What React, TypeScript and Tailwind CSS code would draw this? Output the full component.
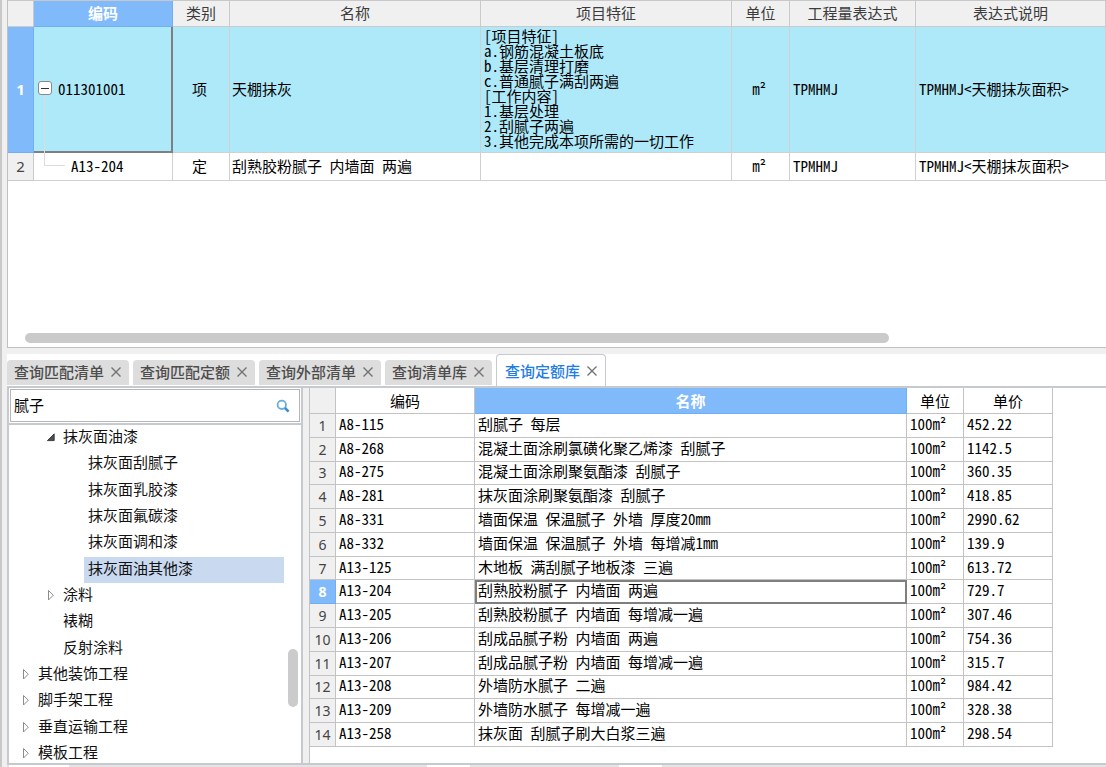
import { useState } from "react";
import type { ReactNode } from "react";

type Quota = { code: string; name: string; price: string };

const quotas: Quota[] = [
  { code: "A8-115", name: "刮腻子 每层", price: "452.22" },
  { code: "A8-268", name: "混凝土面涂刷氯磺化聚乙烯漆 刮腻子", price: "1142.5" },
  { code: "A8-275", name: "混凝土面涂刷聚氨酯漆 刮腻子", price: "360.35" },
  { code: "A8-281", name: "抹灰面涂刷聚氨酯漆 刮腻子", price: "418.85" },
  { code: "A8-331", name: "墙面保温 保温腻子 外墙 厚度20mm", price: "2990.62" },
  { code: "A8-332", name: "墙面保温 保温腻子 外墙 每增减1mm", price: "139.9" },
  { code: "A13-125", name: "木地板 满刮腻子地板漆 三遍", price: "613.72" },
  { code: "A13-204", name: "刮熟胶粉腻子 内墙面 两遍", price: "729.7" },
  { code: "A13-205", name: "刮熟胶粉腻子 内墙面 每增减一遍", price: "307.46" },
  { code: "A13-206", name: "刮成品腻子粉 内墙面 两遍", price: "754.36" },
  { code: "A13-207", name: "刮成品腻子粉 内墙面 每增减一遍", price: "315.7" },
  { code: "A13-208", name: "外墙防水腻子 二遍", price: "984.42" },
  { code: "A13-209", name: "外墙防水腻子 每增减一遍", price: "328.38" },
  { code: "A13-258", name: "抹灰面 刮腻子刷大白浆三遍", price: "298.54" },
];

const features = [
  "[项目特征]",
  "a.钢筋混凝土板底",
  "b.基层清理打磨",
  "c.普通腻子满刮两遍",
  "[工作内容]",
  "1.基层处理",
  "2.刮腻子两遍",
  "3.其他完成本项所需的一切工作",
];

type Node = { label: string; level: 0 | 1 | 2; state?: "open" | "closed" };

const nodes: Node[] = [
  { label: "抹灰面油漆", level: 1, state: "open" },
  { label: "抹灰面刮腻子", level: 2 },
  { label: "抹灰面乳胶漆", level: 2 },
  { label: "抹灰面氟碳漆", level: 2 },
  { label: "抹灰面调和漆", level: 2 },
  { label: "抹灰面油其他漆", level: 2 },
  { label: "涂料", level: 1, state: "closed" },
  { label: "裱糊", level: 1 },
  { label: "反射涂料", level: 1 },
  { label: "其他装饰工程", level: 0, state: "closed" },
  { label: "脚手架工程", level: 0, state: "closed" },
  { label: "垂直运输工程", level: 0, state: "closed" },
  { label: "模板工程", level: 0, state: "closed" },
];

const indent = { 0: "pl-[11px]", 1: "pl-[36px]", 2: "pl-[61px]" };

const tabs = ["查询匹配清单", "查询匹配定额", "查询外部清单", "查询清单库", "查询定额库"];

const mono = "font-['Noto_Sans_Mono_CJK_SC','Liberation_Mono','Noto_Sans_CJK_SC',monospace]";

function Head({ children, selected }: { children?: ReactNode; selected?: boolean }) {
  return (
    <th
      scope="col"
      className={
        selected
          ? "border-r border-b border-[#6fb0f3] bg-[#80bafa] p-0 pb-[2px] font-bold text-white"
          : "border-r border-b border-[#cacaca] bg-[#f0f0f0] p-0 pb-[2px] font-normal text-[#3c3c3c]"
      }
    >
      {children}
    </th>
  );
}

function Cell({ children, className = "" }: { children?: ReactNode; className?: string }) {
  return <td className={`border-r border-b border-[#d0d0d0] pt-0 pb-[3px] ${className}`}>{children}</td>;
}

function BillTable() {
  return (
    <table className="w-full table-fixed border-separate border-spacing-0 border-t border-t-[#c8c8c8] text-[15px] leading-[15px]">
      <colgroup>
        <col className="w-[26px]" />
        <col className="w-[139px]" />
        <col className="w-[57px]" />
        <col />
        <col />
        <col className="w-[58px]" />
        <col className="w-[126px]" />
        <col className="w-[190px]" />
      </colgroup>
      <thead>
        <tr className="h-[26px]">
          <Head />
          <Head selected>编码</Head>
          <Head>类别</Head>
          <Head>名称</Head>
          <Head>项目特征</Head>
          <Head>单位</Head>
          <Head>工程量表达式</Head>
          <Head>表达式说明</Head>
        </tr>
      </thead>
      <tbody className={`${mono} text-black`}>
        <tr className="h-[126px] bg-[#aee9fa]">
          <th
            scope="row"
            className="border-r border-b border-[#6fb0f3] bg-[#80bafa] p-0 font-['Noto_Sans',sans-serif] font-bold text-white"
          >
            1
          </th>
          <td className="relative border-r-2 border-b-2 border-[#7f7f7f] pt-0 pr-0 pb-[2px] pl-1">
            <span className="absolute top-[69px] bottom-[-2px] left-[10px] w-px bg-[#dcdcdc]" />
            <div className="flex items-center gap-[6px]">
              <button
                type="button"
                aria-label="折叠"
                className="flex h-[14px] w-[14px] items-center justify-center rounded-[3px] border border-[#8a8a8a] bg-white"
              >
                <span className="h-px w-2 bg-[#333]" />
              </button>
              <span>011301001</span>
            </div>
          </td>
          <Cell className="pr-[3px] pl-0 text-center">项</Cell>
          <Cell className="px-[2px]">天棚抹灰</Cell>
          <Cell className="px-[3px]">
            {features.map((line) => (
              <div key={line} className="whitespace-nowrap">
                {line}
              </div>
            ))}
          </Cell>
          <Cell className="pr-[3px] pl-0 text-center">m²</Cell>
          <Cell className="px-[3px]">TPMHMJ</Cell>
          <Cell className="px-[3px] whitespace-nowrap">TPMHMJ&lt;天棚抹灰面积&gt;</Cell>
        </tr>
        <tr className="h-[28px] bg-white">
          <th
            scope="row"
            className="border-r border-b border-[#cacaca] bg-[#f0f0f0] p-0 font-['Noto_Sans',sans-serif] font-normal text-[#444]"
          >
            2
          </th>
          <Cell className="relative pl-[37px]">
            <span className="absolute top-0 left-[10px] h-[13px] w-[21px] border-b border-l border-[#dcdcdc]" />
            A13-204
          </Cell>
          <Cell className="pr-[3px] pl-0 text-center">定</Cell>
          <Cell className="px-[2px] whitespace-nowrap">刮熟胶粉腻子 内墙面 两遍</Cell>
          <Cell />
          <Cell className="pr-[3px] pl-0 text-center">m²</Cell>
          <Cell className="px-[3px]">TPMHMJ</Cell>
          <Cell className="px-[3px] whitespace-nowrap">TPMHMJ&lt;天棚抹灰面积&gt;</Cell>
        </tr>
      </tbody>
    </table>
  );
}

function Cross() {
  return (
    <svg viewBox="0 0 10 10" className="h-[10px] w-[10px]" fill="none" stroke="#737373" strokeWidth="1.4">
      <path d="M0.5 0.5 9.5 9.5M9.5 0.5 0.5 9.5" />
    </svg>
  );
}

function TabBar({ active, onSelect }: { active: string; onSelect: (tab: string) => void }) {
  return (
    <div className="flex h-[32px] items-end gap-1 bg-white">
      {tabs.map((tab) => (
        <div
          key={tab}
          className={
            tab === active
              ? "flex h-[32px] items-center gap-[7px] rounded-t-[4px] border border-b-0 border-[#c6c9cd] bg-white px-2 font-medium text-[#1f7de6]"
              : "mb-px flex h-[25px] items-center gap-[7px] rounded-t-[4px] bg-[#dddddd] pr-2 pb-px pl-[7px] font-medium text-[#4d4d4d]"
          }
        >
          <button type="button" onClick={() => onSelect(tab)} className="leading-5">
            {tab}
          </button>
          <button type="button" aria-label={`关闭${tab}`}>
            <Cross />
          </button>
        </div>
      ))}
    </div>
  );
}

function Arrow({ state }: { state?: "open" | "closed" }) {
  return (
    <svg viewBox="0 0 14 12" className="mb-[2px] h-3 w-[14px] shrink-0">
      {state === "open" && <path d="M9.2 2.8V9.6H2.4Z" fill="#505050" stroke="#222" strokeWidth="0.8" />}
      {state === "closed" && <path d="M3.5 1.5 8.3 6.2 3.5 11Z" fill="#fff" stroke="#8c8c8c" strokeWidth="1" />}
    </svg>
  );
}

function Sidebar() {
  const [query, setQuery] = useState("腻子");
  const [picked, setPicked] = useState("抹灰面油其他漆");
  return (
    <aside className="flex w-[296px] shrink-0 flex-col border-x-2 border-[#c6c9cd] bg-white">
      <div className="border-b-2 border-[#c6c9cd] p-px">
        <div className="flex h-[33px] items-center border border-[#b4b6ba] bg-white pr-[9px] pl-[3px]">
          <input
            aria-label="搜索"
            value={query}
            onChange={(e) => setQuery(e.target.value)}
            className="min-w-0 flex-1 bg-transparent text-black outline-none"
          />
          <button type="button" aria-label="查询">
            <svg viewBox="0 0 14 14" className="h-[14px] w-[14px]" fill="none">
              <circle cx="5.8" cy="5.8" r="4.2" stroke="#67aedb" strokeWidth="1.8" />
              <path d="M9 9 12.6 12.6" stroke="#3b8fcb" strokeWidth="2.6" />
            </svg>
          </button>
        </div>
      </div>
      <div className="relative min-h-0 flex-1 overflow-hidden">
        <ul className="flex h-[342px] flex-col">
          {nodes.map((node) => (
            <li key={node.label} className={`flex min-h-0 flex-1 items-center ${indent[node.level]}`}>
              <Arrow state={node.state} />
              <button
                type="button"
                onClick={() => setPicked(node.label)}
                className={`h-full pb-1 pl-1 text-left leading-[22px] text-[#111] ${node.label === picked ? "mr-[17px] flex-1 bg-[#c9d9f0]" : ""}`}
              >
                {node.label}
              </button>
            </li>
          ))}
        </ul>
        <span className="absolute right-[3px] bottom-[56px] h-[58px] w-[10px] rounded-full bg-[#cbcbcb]" />
      </div>
    </aside>
  );
}

function QuotaTable() {
  const [selected, setSelected] = useState("A13-204");
  const head = "h-[26px] border-r border-b border-[#c3c3c3] p-0 font-normal";
  const cell = "border-r border-b border-[#c3c3c3] pt-0 pr-0 pb-1 pl-[3px] whitespace-nowrap";
  return (
    <table className={`${mono} h-[359px] w-[743px] table-fixed border-separate border-spacing-0 text-[15px] leading-[15px] text-black`}>
      <colgroup>
        <col className="w-[26px]" />
        <col className="w-[139px]" />
        <col className="w-[432px]" />
        <col className="w-[57px]" />
        <col className="w-[89px]" />
      </colgroup>
      <thead>
        <tr className="h-[26px]">
          <th scope="col" className={`${head} bg-[#f0f0f0]`} />
          <th scope="col" className={head}>编码</th>
          <th scope="col" className="h-[26px] border-r border-b border-[#6fb0f3] bg-[#80bafa] p-0 font-bold text-white">
            名称
          </th>
          <th scope="col" className={head}>单位</th>
          <th scope="col" className={head}>单价</th>
        </tr>
      </thead>
      <tbody>
        {quotas.map((q, i) => {
          const on = q.code === selected;
          return (
            <tr key={q.code} onClick={() => setSelected(q.code)}>
              <th
                scope="row"
                className={
                  on
                    ? "border-r border-b border-[#6fb0f3] bg-[#80bafa] p-0 font-['Noto_Sans',sans-serif] text-[14px] font-bold text-white"
                    : "border-r border-b border-[#c3c3c3] bg-[#f0f0f0] p-0 font-['Noto_Sans',sans-serif] text-[14px] font-normal text-[#444]"
                }
              >
                {i + 1}
              </th>
              <td className={cell}>{q.code}</td>
              <td className={on ? `${cell} outline-2 -outline-offset-2 outline-[#7f7f7f]` : cell}>{q.name}</td>
              <td className={cell}>100m²</td>
              <td className={cell}>{q.price}</td>
            </tr>
          );
        })}
      </tbody>
    </table>
  );
}

export default function App() {
  const [tab, setTab] = useState("查询定额库");
  return (
    <div className="flex h-screen bg-[#f0f0f0] font-['Noto_Sans_CJK_SC',sans-serif] text-[15px]">
      <div className="w-[7px] shrink-0 border-l-2 border-[#c8c8c8]" />
      <main className="flex min-w-0 flex-1 flex-col">
        <section className="flex h-[348px] shrink-0 flex-col justify-between border-b border-l border-[#c0c0c0] bg-white">
          <BillTable />
          <div className="mr-[217px] mb-1 ml-[17px] h-[10px] rounded-full bg-[#cacaca]" />
        </section>
        <div className="mt-[6px]">
          <TabBar active={tab} onSelect={setTab} />
        </div>
        <section className="flex min-h-0 flex-1 border-y-2 border-[#c6c9cd] bg-[#f0f0f0]">
          <Sidebar />
          <div className="ml-[6px] min-w-0 flex-1 overflow-hidden border-l border-[#c3c3c3] bg-white">
            <QuotaTable />
          </div>
        </section>
        <footer className="flex h-[2px] shrink-0 bg-[#e4e4e6]">
          <span className="ml-[2px] w-[60px] bg-white" />
          <span className="ml-[358px] w-[43px] bg-white" />
          <span className="ml-[149px] w-[43px] bg-white" />
        </footer>
      </main>
    </div>
  );
}
